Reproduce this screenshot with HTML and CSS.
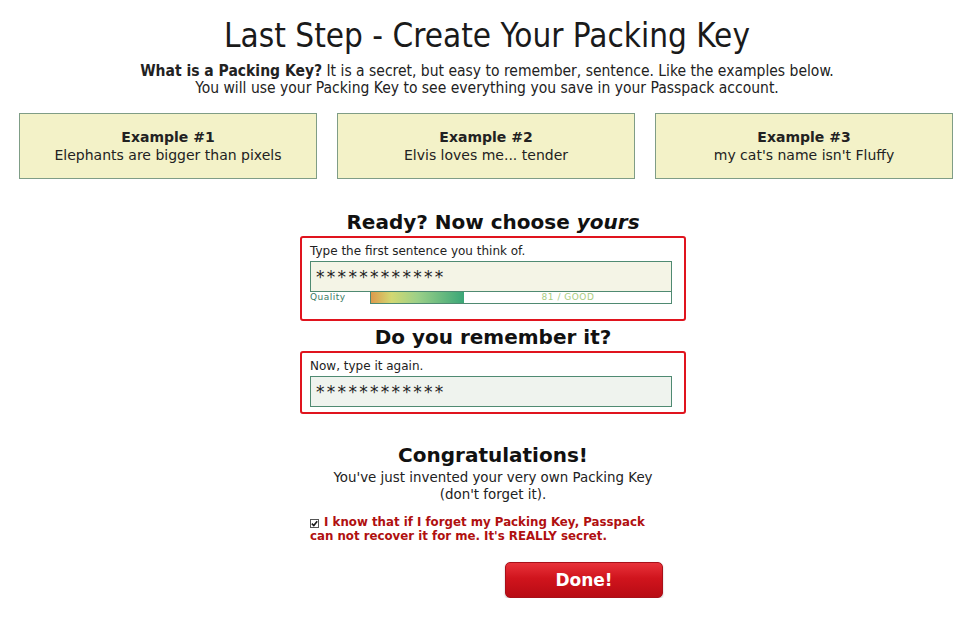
FILE: index.html
```html
<!DOCTYPE html>
<html lang="en">
<head>
<meta charset="utf-8"/>
<title>Last Step - Create Your Packing Key</title>
<link rel="stylesheet" href="styles.css">
</head>
<body>
<div class="page">
  <h1>Last Step - Create Your Packing Key</h1>
  <p class="intro"><b>What is a Packing Key?</b> It is a secret, but easy to remember, sentence. Like the examples below.<br>
  You will use your Packing Key to see everything you save in your Passpack account.</p>

  <div class="examples">
    <div class="example"><b>Example #1</b><span>Elephants are bigger than pixels</span></div>
    <div class="example"><b>Example #2</b><span>Elvis loves me... tender</span></div>
    <div class="example"><b>Example #3</b><span>my cat's name isn't Fluffy</span></div>
  </div>

  <div class="form">
    <h2>Ready? Now choose <i>yours</i></h2>
    <div class="field">
      <label for="key1">Type the first sentence you think of.</label>
      <input type="text" id="key1" value="************">
      <div class="quality">
        <span class="qlabel">Quality</span>
        <div class="meter">
          <div class="fill" style="width:31%"></div>
          <span class="score">81 / GOOD</span>
        </div>
      </div>
    </div>

    <h2>Do you remember it?</h2>
    <div class="field">
      <label for="key2">Now, type it again.</label>
      <input type="text" id="key2" class="again" value="************">
    </div>

    <h2 class="congrats">Congratulations!</h2>
    <p class="note">You've just invented your very own Packing Key<br>(don't forget it).</p>

    <label class="agree">
      <span class="check"><svg width="7" height="7" viewBox="0 0 7 7"><path d="M0.8 3.6 L2.8 5.6 L6.2 1.2" fill="none" stroke="#1a1a1a" stroke-width="1.6"/></svg></span>
      I know that if I forget my Packing Key, Passpack can not recover it for me. It's REALLY secret.
    </label>

    <div class="actions">
      <button type="button" class="done">Done!</button>
    </div>
  </div>
</div>
</body>
</html>
```

FILE: styles.css
```css
*{box-sizing:border-box;margin:0;padding:0;}
body{background:#fff;color:#111;font-family:"DejaVu Sans",Verdana,sans-serif;}
.page{width:974px;padding:16px 19px 0;}
h1{text-align:center;font-family:"DejaVu Sans Condensed","DejaVu Sans",sans-serif;font-weight:normal;font-size:33px;line-height:40px;color:#1a1a1a;}
.intro{text-align:center;font-family:"DejaVu Sans Condensed","DejaVu Sans",sans-serif;font-size:15.5px;line-height:17px;margin-top:7px;color:#222;}
.examples{display:grid;grid-template-columns:repeat(3,298px);gap:20px;margin-top:16px;}
.example{height:66px;background:#f3f2c8;border:1px solid #7f9d86;display:flex;flex-direction:column;align-items:center;justify-content:center;font-size:14px;line-height:18px;color:#222;}
.form{width:386px;margin:31px 0 0 281px;}
h2{text-align:center;font-size:20px;line-height:24px;font-weight:bold;color:#111;}
h2 i{font-style:italic;}
.field{border:2px solid #e0141e;border-radius:3px;padding:5px 12px 5px 8px;margin:2px 0 4px;}
.field label{display:block;font-size:12px;line-height:16px;color:#222;margin-bottom:2px;}
.field input{display:block;width:100%;height:31px;border:1px solid #4f8a72;background:#f4f4e6;padding:0 5px;font-family:"DejaVu Sans",sans-serif;font-size:17px;color:#222;letter-spacing:2.3px;outline:none;}
.field input.again{background:#eff3ee;}
.quality{display:flex;height:12px;margin-bottom:10px;}
.qlabel{width:60px;font-size:9px;line-height:11px;color:#3a7a62;letter-spacing:.5px;}
.meter{flex:1;position:relative;border:1px solid #4f8a72;border-top:none;background:#fff;}
.fill{height:100%;background:linear-gradient(to right,#dd9a4c,#d2d872 22%,#9cd088 50%,#3aa677);}
.score{position:absolute;left:0;right:0;top:0;text-align:center;font-size:9px;line-height:11px;color:#a8cc80;padding-left:94px;letter-spacing:.5px;}
.congrats{margin-top:29px;}
.note{text-align:center;font-size:13.4px;line-height:17px;color:#222;margin-top:2px;}
.agree{display:block;width:345px;margin:12px 0 0 10px;font-size:11.8px;line-height:14px;font-weight:bold;color:#b01010;}
.check{display:inline-flex;align-items:center;justify-content:center;width:9px;height:9px;border:1px solid #555;background:#fff;vertical-align:-1px;margin-right:1px;}
.actions{display:flex;justify-content:flex-end;padding-right:23px;margin-top:19px;}
.done{width:158px;height:36px;border:1px solid #a8101a;border-radius:5px;background:linear-gradient(#e8323a,#d0141d 45%,#b80c14);color:#fff;font-family:"DejaVu Sans",sans-serif;font-weight:bold;font-size:17px;cursor:pointer;box-shadow:0 1px 2px rgba(0,0,0,.25);}
```
